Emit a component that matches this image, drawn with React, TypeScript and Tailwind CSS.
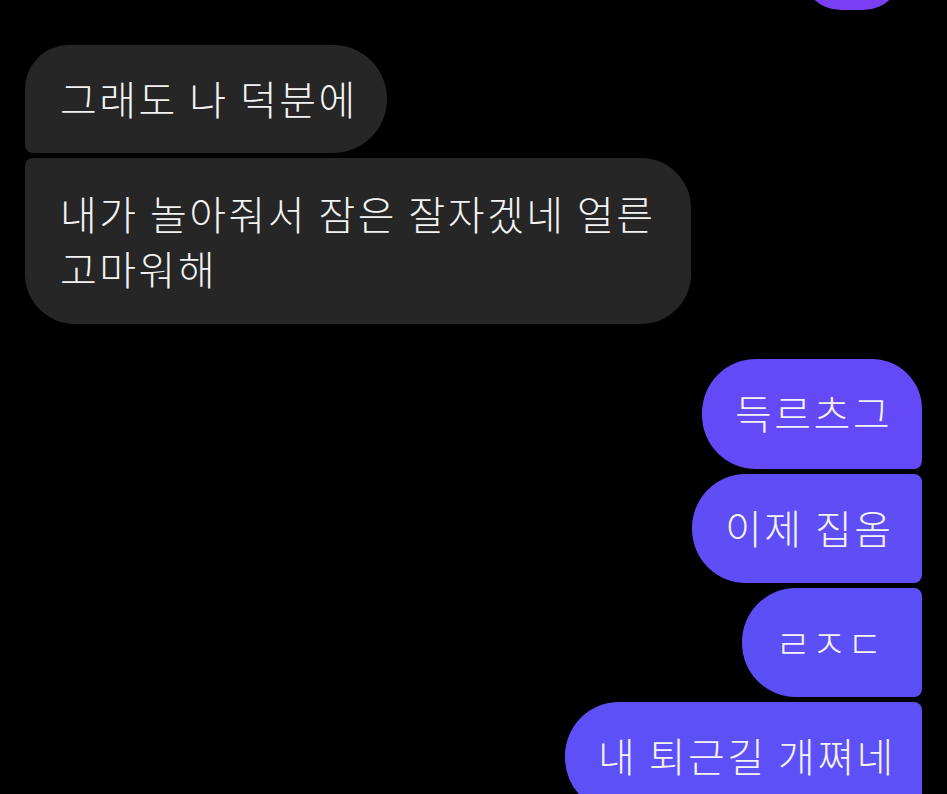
import React from "react";

type Msg = {
  text: React.ReactNode;
  className: string;
};

const incoming: Msg[] = [
  {
    text: "그래도 나 덕분에",
    className: "w-[362px] h-[108px] pt-[26px] rounded-tl-[44px] rounded-r-[54px] rounded-bl-[8px]",
  },
  {
    text: (
      <>
        내가 놀아줘서 잠은 잘자겠네 얼른
        <br />
        고마워해
      </>
    ),
    className: "w-[666px] h-[166px] pt-[28px] rounded-tl-[8px] rounded-bl-[50px] rounded-r-[50px]",
  },
];

const outgoing: Msg[] = [
  {
    text: "득르츠그",
    className:
      "w-[220px] h-[110px] pt-[26px] bg-[#6449f6] rounded-tl-[54px] rounded-tr-[50px] rounded-bl-[54px] rounded-br-[8px]",
  },
  {
    text: "이제 집옴",
    className: "w-[230px] h-[109px] pt-[26px] bg-[#5f4df6] rounded-l-[54px] rounded-r-[8px]",
  },
  {
    text: <span className="text-[39px] tracking-[0px]">ㄹㅈㄷ</span>,
    className: "w-[180px] h-[109px] pt-[26px] bg-[#5d4ff6] rounded-l-[54px] rounded-r-[8px]",
  },
  {
    text: "내 퇴근길 개쪄네",
    className: "w-[357px] h-[110px] pt-[26px] bg-[#5c50f6] rounded-tl-[54px] rounded-bl-[54px] rounded-r-[8px]",
  },
];

export default function App() {
  return (
    <div
      className="w-[947px] h-[794px] overflow-hidden bg-black text-[#f3f3f3] text-[40px] leading-[55px] tracking-[2.5px] font-light"
      style={{ fontFamily: '"Noto Sans CJK KR", "Noto Sans", sans-serif' }}
    >
      {/* tail of the previous sent bubble */}
      <div className="flex justify-end pr-[44px]">
        <div className="h-[10px] w-[102px] overflow-hidden">
          <div className="h-[60px] -mt-[50px] bg-[#7a3ef4] rounded-b-[40px]" />
        </div>
      </div>

      <div className="mt-[35px] pl-[25px] flex flex-col items-start gap-[5px]">
        {incoming.map((m, i) => (
          <div key={i} className={`bg-[#262626] pl-[35px] whitespace-nowrap ${m.className}`}>
            {m.text}
          </div>
        ))}
      </div>

      <div className="mt-[35px] pr-[25px] flex flex-col items-end gap-[5px]">
        {outgoing.map((m, i) => (
          <div key={i} className={`pl-[33px] whitespace-nowrap shrink-0 ${m.className}`}>
            {m.text}
          </div>
        ))}
      </div>
    </div>
  );
}
